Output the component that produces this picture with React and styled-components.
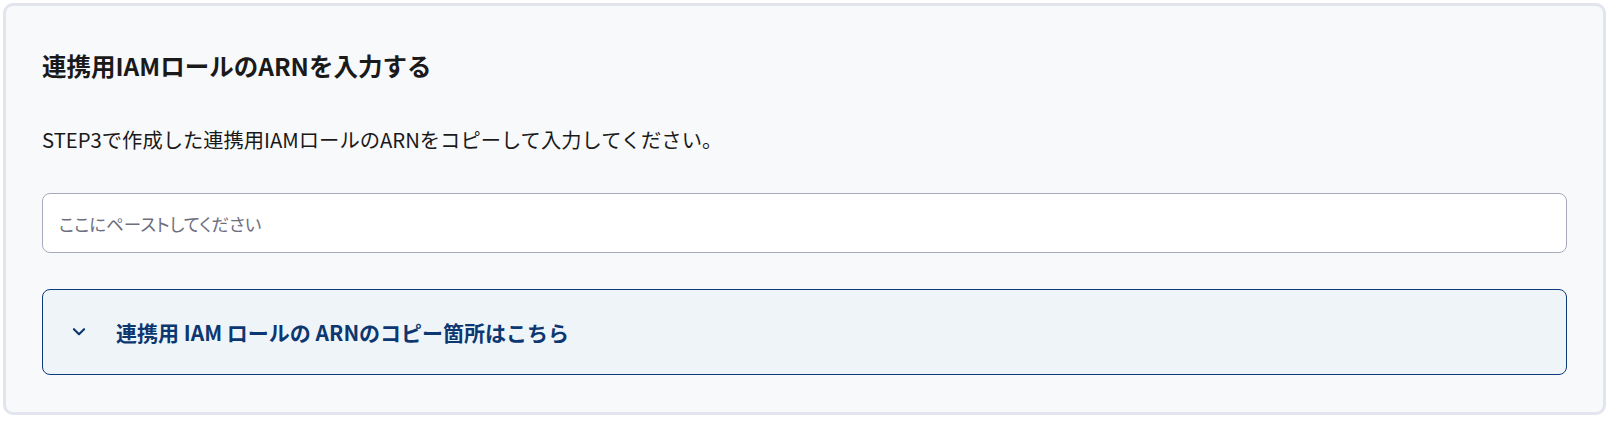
import React from "react";
import styled, { createGlobalStyle } from "styled-components";

const Global = createGlobalStyle`
  html, body { margin: 0; padding: 0; background: #ffffff; }
  body { font-family: "Noto Sans CJK JP", "Noto Sans", sans-serif; }
  * { box-sizing: border-box; }
`;

const Page = styled.div`
  padding: 3px 3px 0 3px;
`;

const Card = styled.section`
  border: 3px solid #e2e4ee;
  border-radius: 10px;
  background: #f8f9fb;
  padding: 43px 36px 37px 36px;
  display: flex;
  flex-direction: column;
`;

const Title = styled.h2`
  margin: 0;
  font-size: 24.5px;
  line-height: 34px;
  font-weight: 700;
  color: #1a1a1a;
`;

const Description = styled.p`
  margin: 41px 0 0 0;
  font-size: 20.3px;
  line-height: 30px;
  color: #1a1a1a;
`;

const Input = styled.input`
  margin-top: 39px;
  height: 60px;
  width: 100%;
  border: 1px solid #a8aabb;
  border-radius: 8px;
  background: #ffffff;
  padding: 0 16px;
  font-family: inherit;
  font-size: 17.5px;
  font-feature-settings: "palt";
  color: #1a1a1a;
  &::placeholder { color: #6e6e7e; }
  outline: none;
`;

const Accordion = styled.button`
  margin-top: 36px;
  height: 86px;
  width: 100%;
  display: flex;
  align-items: center;
  gap: 28px;
  padding: 0 27px;
  border: 1px solid #0f3a78;
  border-radius: 8px;
  background: #eff4f9;
  color: #0c3770;
  font-family: inherit;
  font-size: 21px;
  font-weight: 700;
  text-align: left;
  cursor: pointer;
`;

const Chevron = () => (
  <svg width="18" height="18" viewBox="0 0 16 16" fill="none">
    <path d="M3.5 5.5 L8 10 L12.5 5.5" stroke="#0c3770" strokeWidth="1.9" strokeLinecap="round" strokeLinejoin="round" />
  </svg>
);

export default function App() {
  return (
    <Page>
      <Global />
      <Card>
        <Title>連携用IAMロールのARNを入力する</Title>
        <Description>STEP3で作成した連携用IAMロールのARNをコピーして入力してください。</Description>
        <Input placeholder="ここにペーストしてください" />
        <Accordion>
          <Chevron />
          <span>連携用 IAM ロールの ARNのコピー箇所はこちら</span>
        </Accordion>
      </Card>
    </Page>
  );
}
